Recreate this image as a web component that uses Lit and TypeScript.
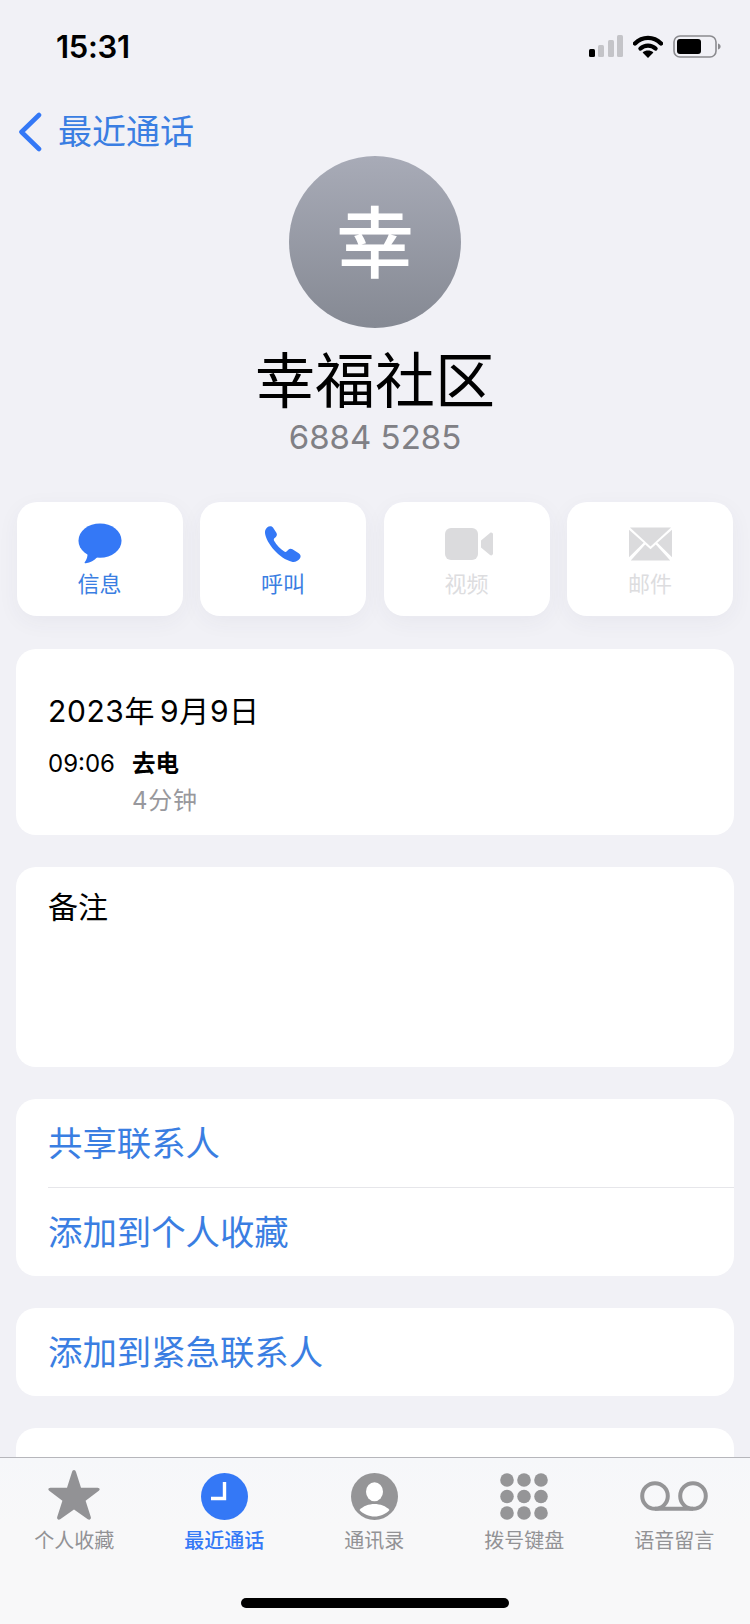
import { LitElement, html, css, svg } from 'lit';
import { customElement } from 'lit/decorators.js';

const icons = {
  signal: svg`<svg class="signal" width="34" height="22" viewBox="0 0 34 22">
    <rect x="0" y="14" width="6" height="8" rx="1.5" fill="#000"/>
    <rect x="9" y="10" width="6" height="12" rx="1.5" fill="#c4c4c8"/>
    <rect x="19" y="5" width="6" height="17" rx="1.5" fill="#c4c4c8"/>
    <rect x="28" y="0" width="6" height="22" rx="1.5" fill="#c4c4c8"/>
  </svg>`,
  wifi: svg`<svg width="30" height="23" viewBox="0 0 30 23">
    <path d="M2 8.5C9.5 1 20.5 1 28 8.5" fill="none" stroke="#000" stroke-width="4.4" stroke-linecap="round"/>
    <path d="M7.5 13.5C11.7 9.6 18.3 9.6 22.5 13.5" fill="none" stroke="#000" stroke-width="4.4" stroke-linecap="round"/>
    <path d="M15 23L9.6 17.4C12.6 14.8 17.4 14.8 20.4 17.4Z" fill="#000"/>
  </svg>`,
  battery: svg`<svg width="48" height="23" viewBox="0 0 48 23">
    <rect x="1" y="1" width="42" height="21" rx="6" fill="none" stroke="#8b8b8f" stroke-width="1.6"/>
    <rect x="4" y="4" width="24" height="15" rx="3" fill="#000"/>
    <path d="M45 8.5c1.8.5 2.6 1.6 2.6 3s-.8 2.5-2.6 3z" fill="#8b8b8f"/>
  </svg>`,
  back: svg`<svg width="24" height="40" viewBox="0 0 24 40">
    <path d="M21 3L3.5 20L21 37" fill="none" stroke="#3478f6" stroke-width="4.6" stroke-linecap="round" stroke-linejoin="round"/>
  </svg>`,
  bubble: svg`<svg width="44" height="41" viewBox="0 0 46 42" fill="#3478f6">
    <ellipse cx="23" cy="18" rx="22.5" ry="18"/>
    <path d="M10 29C10.5 34 9 38 7 40.5C6.6 41.3 7.2 41.9 8.2 41.7C13 41 17 39 20 35.5Z"/>
  </svg>`,
  phone: svg`<svg width="36" height="36" viewBox="0 0 38 38" fill="#3478f6">
    <path d="M2.2 1.6C4.2-.2 7-.2 8.4 1.6L12 7.1C12.9 8.6 12.7 10.4 11.5 11.5L9.9 13C9.2 13.7 9.1 14.6 9.6 15.5C12.2 20 16.6 24.6 20.4 27C21.3 27.6 22.3 27.4 23 26.7L24.6 25.1C25.8 23.9 27.5 23.7 29 24.6L35.6 28.7C37.8 30.1 38.2 32.6 36.6 34.6C34.8 37 31.4 38.4 28.4 37.7C22 36.3 14.8 31.4 9.6 25.4C4.6 19.6 0.6 12.8 0 7.4C-.2 5.2.6 3 2.2 1.6Z"/>
  </svg>`,
  video: svg`<svg width="52" height="32" viewBox="-4 0 52 32" fill="#dbdbdd">
    <rect x="0" y="0" width="33" height="32" rx="6"/>
    <path d="M36 12.5L45 5C46.2 4 48 4.8 48 6.4V25.6C48 27.2 46.2 28 45 27L36 19.5Z"/>
  </svg>`,
  mail: svg`<svg width="43" height="34" viewBox="0 0 44 34" fill="#dbdbdd">
    <path d="M1 0H43L22 19.5Z"/>
    <path d="M0 2.5V30.5L15 15.8Z"/>
    <path d="M44 2.5V30.5L29 15.8Z"/>
    <path d="M1.8 34L16.6 17.4L22 22.4L27.4 17.4L42.2 34Z"/>
  </svg>`,
  star: svg`<svg class="star" width="52" height="50" viewBox="0 0 52 50" fill="#929295">
    <path d="M26 0C27 0 27.6.8 28 2L33 17.8H49.6C51.6 17.8 52.4 19.6 50.8 20.8L37.6 30.8L42.8 47C43.4 49.2 41.6 50.4 39.8 49.2L26 39.4L12.2 49.2C10.4 50.4 8.6 49.2 9.2 47L14.4 30.8L1.2 20.8C-.4 19.6.4 17.8 2.4 17.8H19L24 2C24.4.8 25 0 26 0Z"/>
  </svg>`,
  clock: svg`<svg width="47" height="47" viewBox="0 0 47 47">
    <circle cx="23.5" cy="23.5" r="23.5" fill="#3478f6"/>
    <path d="M23.5 9V25.5H10" fill="none" stroke="#fff" stroke-width="3.4"/>
  </svg>`,
  person: svg`<svg width="47" height="47" viewBox="0 0 47 47">
    <circle cx="23.5" cy="23.5" r="23.5" fill="#959597"/>
    <ellipse cx="23.5" cy="18.7" rx="8.5" ry="9.5" fill="#fff"/>
    <path d="M8.5 37C12 33 18 31 23.5 31C29 31 35 33 38.5 37C35 41 29 43.5 23.5 43.5C18 43.5 12 41 8.5 37Z" fill="#fff"/>
  </svg>`,
  keypad: svg`<svg width="48" height="47" viewBox="0 0 48 47" fill="#959597">
    ${[7, 24, 41].map((cx) =>
      [7, 23.5, 40].map((cy) => svg`<circle cx=${cx} cy=${cy} r="6.8"/>`)
    )}
  </svg>`,
  voicemail: svg`<svg width="68" height="30" viewBox="0 0 68 30">
    <circle cx="15" cy="15" r="12.8" fill="none" stroke="#959597" stroke-width="4"/>
    <circle cx="53" cy="15" r="12.8" fill="none" stroke="#959597" stroke-width="4"/>
    <path d="M15 27.8H53" fill="none" stroke="#959597" stroke-width="4"/>
  </svg>`,
};

const actions = [
  { icon: icons.bubble, label: '信息', on: true },
  { icon: icons.phone, label: '呼叫', on: true },
  { icon: icons.video, label: '视频', on: false },
  { icon: icons.mail, label: '邮件', on: false },
];

const tabs = [
  { icon: icons.star, label: '个人收藏', on: false },
  { icon: icons.clock, label: '最近通话', on: true },
  { icon: icons.person, label: '通讯录', on: false },
  { icon: icons.keypad, label: '拨号键盘', on: false },
  { icon: icons.voicemail, label: '语音留言', on: false },
];

@customElement('app-root')
export class AppRoot extends LitElement {
  static styles = css`
    :host {
      display: block;
      position: relative;
      width: 750px;
      height: 1624px;
      overflow: hidden;
      background: #f1f1f6;
      font-family: Inter, "Noto Sans CJK SC", sans-serif;
      color: #000;
    }
    .status {
      display: flex;
      justify-content: space-between;
      align-items: center;
      height: 46px;
      padding: 23px 29px 0 56px;
    }
    .time {
      font-size: 31px;
      font-weight: 600;
      letter-spacing: -0.3px;
    }
    .status-icons {
      display: flex;
      align-items: center;
      gap: 10px;
    }
    .back {
      display: flex;
      align-items: center;
      gap: 16px;
      padding: 43px 0 0 18px;
      height: 40px;
      color: #3a7ee2;
      font-size: 34px;
      line-height: 40px;
    }
    .contact {
      display: flex;
      flex-direction: column;
      align-items: center;
      margin-top: 4px;
    }
    .avatar {
      width: 172px;
      height: 172px;
      border-radius: 50%;
      background: linear-gradient(#a8abb7, #858993);
      color: #fff;
      font-size: 78px;
      font-weight: 500;
      line-height: 176px;
      text-align: center;
    }
    .name {
      font-size: 60px;
      line-height: 72px;
      margin-top: 17px;
    }
    .number {
      font-size: 33px;
      line-height: 40px;
      color: #808085;
    }
    .actions {
      display: grid;
      grid-template-columns: repeat(4, 166px);
      gap: 17.5px;
      padding: 0 16.5px;
      margin-top: 45px;
    }
    .action {
      height: 114px;
      border-radius: 20px;
      background: #fff;
      box-shadow: 0 6px 22px rgba(60, 60, 90, 0.05);
      display: flex;
      flex-direction: column;
      align-items: center;
      color: #3a7ee2;
      font-size: 22px;
      line-height: 26px;
    }
    .action.off {
      color: #dddddf;
    }
    .action-icon {
      height: 69px;
      display: flex;
      align-items: center;
      justify-content: center;
      padding-top: 14px;
      box-sizing: border-box;
    }
    .cards {
      display: flex;
      flex-direction: column;
      gap: 32px;
      margin: 33px 16px 0;
    }
    .card {
      background: #fff;
      border-radius: 20px;
      overflow: hidden;
    }
    .call {
      height: 186px;
      padding: 44px 32px 0;
      box-sizing: border-box;
    }
    .date {
      font-size: 30px;
      line-height: 36px;
      letter-spacing: 0.6px;
      word-spacing: -4px;
    }
    .call-row {
      display: grid;
      grid-template-columns: 84px auto;
      margin-top: 15.5px;
      font-size: 24px;
      line-height: 37px;
    }
    .call-type {
      font-weight: 700;
      font-size: 23.5px;
    }
    .call-len {
      grid-column: 2;
      color: #98989d;
      letter-spacing: 0.7px;
    }
    .notes {
      height: 200px;
      padding: 22px 32px 0;
      box-sizing: border-box;
      font-size: 30px;
      line-height: 36px;
    }
    .link {
      height: 84px;
      padding-bottom: 4px;
      margin-left: 32px;
      display: flex;
      align-items: center;
      font-size: 34.4px;
      color: #3a7ee2;
    }
    .link + .link {
      height: 83px;
      padding-bottom: 5px;
      border-top: 1px solid #e6e6ea;
    }
    .link.peek {
      padding: 5px 0 0;
    }
    .tabbar {
      position: absolute;
      left: 0;
      right: 0;
      bottom: 0;
      height: 167px;
      box-sizing: border-box;
      border-top: 1px solid #b6b6bb;
      background: linear-gradient(#f6f7fa, #f8f8f9 40%);
      display: grid;
      grid-template-columns: repeat(5, 150px);
    }
    .tab {
      display: flex;
      flex-direction: column;
      align-items: center;
      padding-right: 1.5px;
      color: #929295;
      font-size: 20px;
      line-height: 24px;
    }
    .tab.on {
      color: #3478f6;
      font-weight: 500;
    }
    .tab-icon {
      height: 62px;
      margin-top: 7px;
      display: flex;
      align-items: center;
    }
    .star {
      margin-bottom: 3px;
    }
    .tab-label {
      margin-top: 2px;
    }
    .home {
      position: absolute;
      left: 241px;
      bottom: 16px;
      width: 268px;
      height: 10px;
      border-radius: 5px;
      background: #000;
    }
  `;

  render() {
    return html`
      <div class="status">
        <span class="time">15:31</span>
        <div class="status-icons">${icons.signal}${icons.wifi}${icons.battery}</div>
      </div>
      <div class="back">${icons.back}<span>最近通话</span></div>
      <div class="contact">
        <div class="avatar">幸</div>
        <div class="name">幸福社区</div>
        <div class="number">6884 5285</div>
      </div>
      <div class="actions">
        ${actions.map(
          (a) => html`<div class="action ${a.on ? '' : 'off'}">
            <div class="action-icon">${a.icon}</div>
            <span>${a.label}</span>
          </div>`
        )}
      </div>
      <div class="cards">
        <div class="card call">
          <div class="date">2023年 9月9日</div>
          <div class="call-row">
            <span class="call-time">09:06</span>
            <span class="call-type">去电</span>
            <span class="call-len">4分钟</span>
          </div>
        </div>
        <div class="card notes">备注</div>
        <div class="card">
          <div class="link">共享联系人</div>
          <div class="link">添加到个人收藏</div>
        </div>
        <div class="card"><div class="link">添加到紧急联系人</div></div>
        <div class="card"><div class="link peek">阻止此来电</div></div>
      </div>
      <div class="tabbar">
        ${tabs.map(
          (t) => html`<div class="tab ${t.on ? 'on' : ''}">
            <div class="tab-icon">${t.icon}</div>
            <span class="tab-label">${t.label}</span>
          </div>`
        )}
      </div>
      <div class="home"></div>
    `;
  }
}
